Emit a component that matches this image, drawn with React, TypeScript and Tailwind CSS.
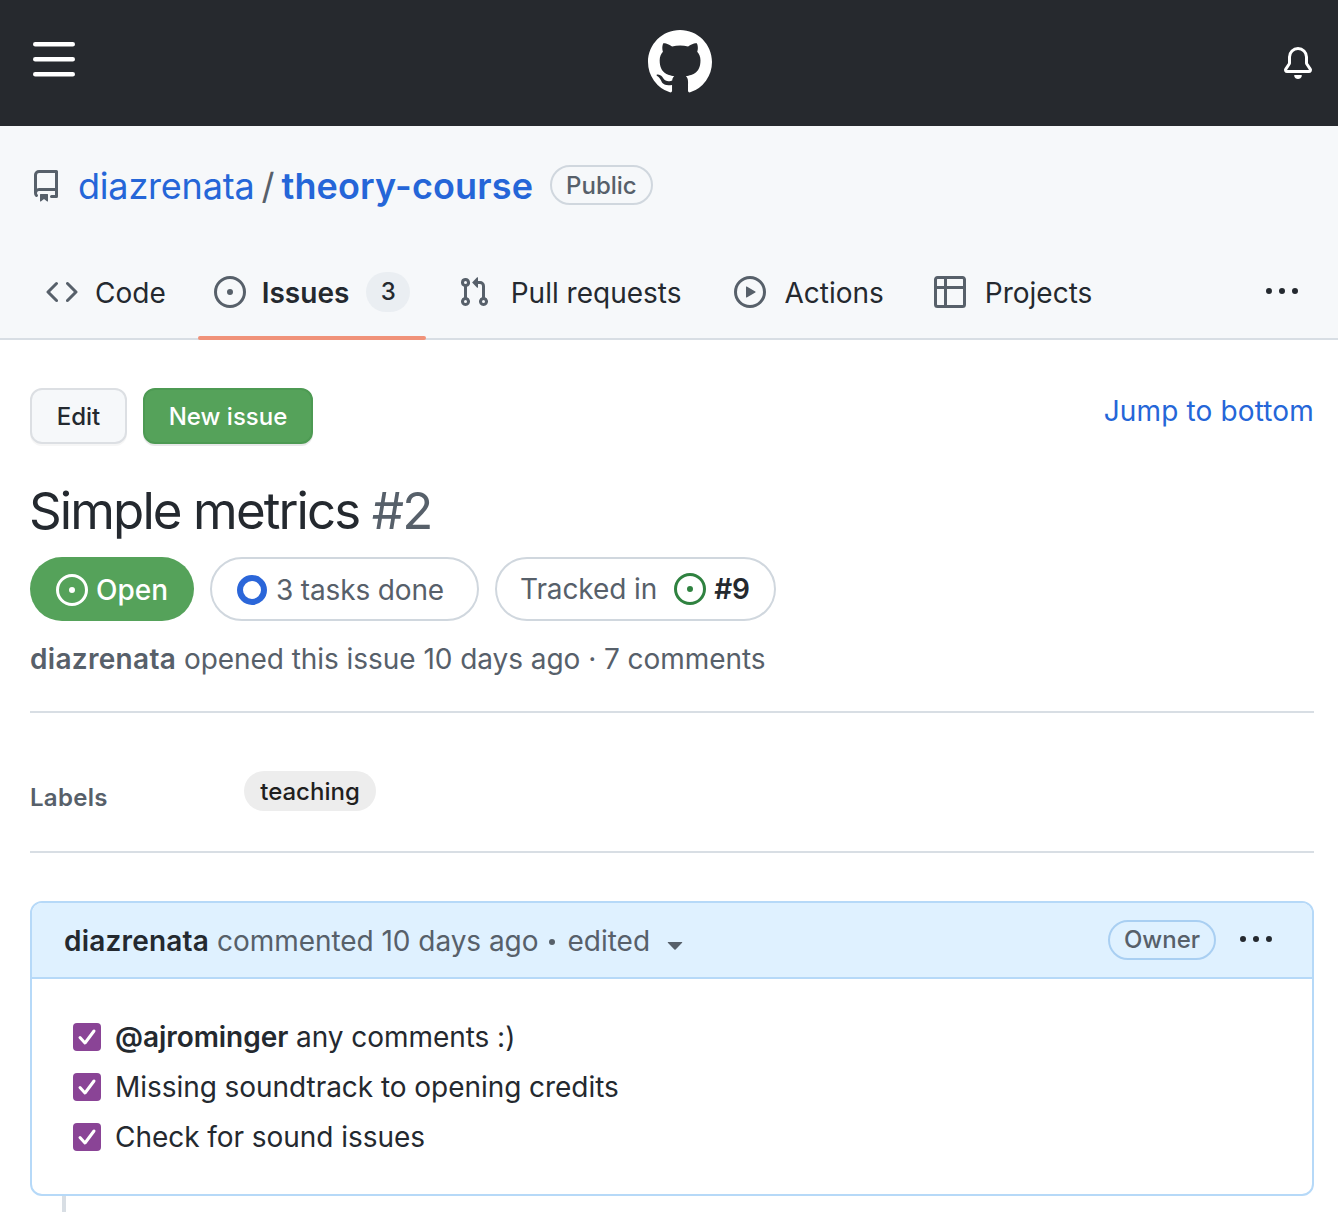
import React from 'react';

// Octicons at their 16px grid, the 24px versions are too thin for this page
const icons = {
  menu: 'M1 2.75A.75.75 0 0 1 1.75 2h12.5a.75.75 0 0 1 0 1.5H1.75A.75.75 0 0 1 1 2.75Zm0 5A.75.75 0 0 1 1.75 7h12.5a.75.75 0 0 1 0 1.5H1.75A.75.75 0 0 1 1 7.75ZM1.75 12h12.5a.75.75 0 0 1 0 1.5H1.75a.75.75 0 0 1 0-1.5Z',
  github:
    'M8 0c4.42 0 8 3.58 8 8a8.013 8.013 0 0 1-5.45 7.59c-.4.08-.55-.17-.55-.38 0-.27.01-1.13.01-2.2 0-.75-.25-1.23-.54-1.48 1.78-.2 3.65-.88 3.65-3.95 0-.88-.31-1.59-.82-2.15.08-.2.36-1.02-.08-2.12 0 0-.67-.22-2.2.82-.64-.18-1.32-.27-2-.27-.68 0-1.36.09-2 .27-1.53-1.03-2.2-.82-2.2-.82-.44 1.1-.16 1.92-.08 2.12-.51.56-.82 1.28-.82 2.15 0 3.06 1.86 3.75 3.64 3.95-.23.2-.44.55-.51 1.07-.46.21-1.61.55-2.33-.66-.15-.24-.6-.83-1.23-.82-.67.01-.27.38.01.53.34.19.73.9.82 1.13.16.45.68 1.31 2.69.94 0 .67.01 1.3.01 1.49 0 .21-.15.45-.55.38A7.995 7.995 0 0 1 0 8c0-4.42 3.58-8 8-8Z',
  bell: 'M8 16c.9 0 1.7-.6 1.9-1.5.1-.3-.1-.5-.4-.5h-3c-.3 0-.5.2-.4.5.2.9 1 1.5 1.9 1.5ZM3 5a5 5 0 0 1 10 0v2.947c0 .05.015.098.042.139l1.703 2.555A1.519 1.519 0 0 1 13.482 13H2.518a1.516 1.516 0 0 1-1.263-2.36l1.703-2.554A.255.255 0 0 0 3 7.947Zm5-3.5A3.5 3.5 0 0 0 4.5 5v2.947c0 .346-.102.683-.294.97l-1.703 2.556a.017.017 0 0 0-.003.01l.001.006c0 .002.002.004.004.006l.006.004.007.001h10.964l.007-.001.006-.004.004-.006.001-.007a.017.017 0 0 0-.003-.01l-1.703-2.554a1.745 1.745 0 0 1-.294-.97V5A3.5 3.5 0 0 0 8 1.5Z',
  repo: 'M2 2.5A2.5 2.5 0 0 1 4.5 0h8.75a.75.75 0 0 1 .75.75v12.5a.75.75 0 0 1-.75.75h-2.5a.75.75 0 0 1 0-1.5h1.75v-2h-8a1 1 0 0 0-.714 1.7.75.75 0 1 1-1.072 1.05A2.495 2.495 0 0 1 2 11.5Zm10.5-1h-8a1 1 0 0 0-1 1v6.708A2.486 2.486 0 0 1 4.5 9h8ZM5 12.25a.25.25 0 0 1 .25-.25h3.5a.25.25 0 0 1 .25.25v3.25a.25.25 0 0 1-.4.2l-1.45-1.087a.249.249 0 0 0-.3 0L5.4 15.7a.25.25 0 0 1-.4-.2Z',
  code: 'm11.28 3.22 4.25 4.25a.75.75 0 0 1 0 1.06l-4.25 4.25a.749.749 0 0 1-1.275-.326.749.749 0 0 1 .215-.734L13.94 8l-3.72-3.72a.749.749 0 0 1 .326-1.275.749.749 0 0 1 .734.215Zm-6.56 0a.751.751 0 0 1 1.042.018.751.751 0 0 1 .018 1.042L2.06 8l3.72 3.72a.749.749 0 0 1-.326 1.275.749.749 0 0 1-.734-.215L.47 8.53a.75.75 0 0 1 0-1.06Z',
  issue:
    'M8 9.5a1.5 1.5 0 1 0 0-3 1.5 1.5 0 0 0 0 3ZM8 0a8 8 0 1 1 0 16A8 8 0 0 1 8 0ZM1.5 8a6.5 6.5 0 1 0 13 0 6.5 6.5 0 0 0-13 0Z',
  pull: 'M1.5 3.25a2.25 2.25 0 1 1 3 2.122v5.256a2.251 2.251 0 1 1-1.5 0V5.372A2.25 2.25 0 0 1 1.5 3.25Zm5.677-.177L9.573.677A.25.25 0 0 1 10 .854V2.5h1A2.5 2.5 0 0 1 13.5 5v5.628a2.251 2.251 0 1 1-1.5 0V5a1 1 0 0 0-1-1h-1v1.646a.25.25 0 0 1-.427.177L7.177 3.427a.25.25 0 0 1 0-.354ZM3.75 2.5a.75.75 0 1 0 0 1.5.75.75 0 0 0 0-1.5Zm0 9.5a.75.75 0 1 0 0 1.5.75.75 0 0 0 0-1.5Zm8.25.75a.75.75 0 1 0 1.5 0 .75.75 0 0 0-1.5 0Z',
  play: 'M8 0a8 8 0 1 1 0 16A8 8 0 0 1 8 0ZM1.5 8a6.5 6.5 0 1 0 13 0 6.5 6.5 0 0 0-13 0Zm4.879-2.773 4.264 2.559a.25.25 0 0 1 0 .428l-4.264 2.559A.25.25 0 0 1 6 10.559V5.442a.25.25 0 0 1 .379-.215Z',
  table:
    'M0 1.75C0 .784.784 0 1.75 0h12.5C15.216 0 16 .784 16 1.75v12.5A1.75 1.75 0 0 1 14.25 16H1.75A1.75 1.75 0 0 1 0 14.25ZM6.5 6.5v8h7.75a.25.25 0 0 0 .25-.25V6.5Zm8-1.5V1.75a.25.25 0 0 0-.25-.25H6.5V5Zm-13 1.5v7.75c0 .138.112.25.25.25H5v-8ZM5 5V1.5H1.75a.25.25 0 0 0-.25.25V5Z',
  kebab:
    'M8 9a1.5 1.5 0 1 0 0-3 1.5 1.5 0 0 0 0 3ZM1.5 9a1.5 1.5 0 1 0 0-3 1.5 1.5 0 0 0 0 3Zm13 0a1.5 1.5 0 1 0 0-3 1.5 1.5 0 0 0 0 3Z',
  caret:
    'm4.427 7.427 3.396 3.396a.25.25 0 0 0 .354 0l3.396-3.396A.25.25 0 0 0 11.396 7H4.604a.25.25 0 0 0-.177.427Z',
};

function Icon({ name, size = 32, className }: { name: keyof typeof icons; size?: number; className?: string }) {
  return (
    <svg viewBox="0 0 16 16" width={size} height={size} fill="currentColor" className={`shrink-0 ${className ?? ''}`}>
      <path fillRule="evenodd" d={icons[name]} />
    </svg>
  );
}

const tasks = [
  { id: 1, mention: '@ajrominger', text: ' any comments :)' },
  { id: 2, mention: '', text: 'Missing soundtrack to opening credits' },
  { id: 3, mention: '', text: 'Check for sound issues' },
];

function TaskRow({ mention, text }: { mention: string; text: string }) {
  return (
    <li className="flex h-[50px] items-center gap-[14px]">
      <span className="flex h-[28px] w-[28px] items-center justify-center rounded-[4px] bg-[#8a4496] text-white">
        <svg viewBox="0 0 28 28" width={28} height={28} fill="none" stroke="currentColor" strokeWidth={3} strokeLinecap="round" strokeLinejoin="round">
          <path d="M7 14.5l5 5.5 9-12" />
        </svg>
      </span>
      <span className="text-[28px] tracking-[-0.05px] text-[#24292f]">
        {mention && <strong className="font-semibold">{mention}</strong>}
        {text}
      </span>
    </li>
  );
}

export default function App() {
  return (
    <div className="h-[1212px] overflow-hidden bg-white font-['Inter',sans-serif] text-[#24292f]">
      {/* Top bar */}
      <header className="flex h-[126px] items-center justify-between bg-[#26292e] pl-[30px] pr-[24px] text-white">
        <Icon name="menu" size={48} className="-mt-[6px]" />
        <Icon name="github" size={64} className="-mt-[2px]" />
        <Icon name="bell" />
      </header>

      {/* Repo header */}
      <div className="h-[214px] border-b-2 border-[#d8dee4] bg-[#f6f8fa]">
        <div className="flex items-center pl-[30px] pt-[38px]">
          <Icon name="repo" className="text-[#57606a]" />
          <a className="ml-[16px] text-[36px] leading-[44px] tracking-[-0.2px] text-[#2566d8]">diazrenata</a>
          <span className="ml-[7px] mr-[7px] text-[36px] leading-[44px] text-[#57606a]">/</span>
          <a className="text-[36px] font-semibold leading-[44px] tracking-[0.15px] text-[#2566d8]">theory-course</a>
          <span className="-mt-[2px] ml-[17px] flex h-[40px] items-center rounded-full border-2 border-[#d0d7de] px-[14px] pt-[2px] text-[24px] font-medium text-[#57606a]">
            Public
          </span>
        </div>

        <nav className="mt-[53px] flex h-[74px] items-start pl-[30px] pr-[24px] text-[28px]">
          <div className="flex h-[64px] items-center gap-[17px] pl-[16px] pr-[33px]">
            <Icon name="code" className="-mt-[2px] text-[#57606a]" />
            Code
          </div>
          <div className="relative -ml-[1px] flex h-[64px] w-[228px] items-center pl-[16px]">
            <Icon name="issue" className="-mt-[2px] text-[#57606a]" />
            <span className="ml-[16px] font-semibold">Issues</span>
            <span className="mb-[2px] ml-[17px] flex h-[40px] w-[44px] items-center justify-center rounded-full bg-[#eaeef2] text-[24px] font-medium">
              3
            </span>
            <span className="absolute -bottom-[15px] left-0 h-[4px] w-full rounded-[2px] bg-[#f09279]" />
          </div>
          <div className="ml-[32px] flex h-[64px] items-center gap-[21px]">
            <Icon name="pull" className="-mt-[2px] text-[#57606a]" />
            Pull requests
          </div>
          <div className="ml-[53px] flex h-[64px] items-center gap-[18px]">
            <Icon name="play" className="-mt-[2px] text-[#57606a]" />
            Actions
          </div>
          <div className="ml-[50px] flex h-[64px] items-center gap-[19px]">
            <Icon name="table" className="-mt-[2px] text-[#57606a]" />
            Projects
          </div>
          <Icon name="kebab" className="ml-auto mr-[16px] mt-[15px]" />
        </nav>
      </div>

      <main className="pl-[30px] pr-[24px]">
        {/* Actions */}
        <div className="flex items-start justify-between pt-[48px]">
          <div className="flex gap-[16px]">
            <button className="h-[56px] w-[97px] rounded-[12px] border-2 border-[#dcdfe3] bg-[#f6f8fa] pt-[2px] text-[24px] font-medium shadow-[0_2px_0_rgba(27,31,36,0.04)]">
              Edit
            </button>
            <button className="h-[56px] w-[170px] rounded-[12px] border-2 border-[#4d9a53] bg-[#55a25a] pt-[2px] text-[24px] font-medium text-white shadow-[0_2px_0_rgba(27,31,36,0.1)]">
              New issue
            </button>
          </div>
          <a className="text-[28px] leading-[46px] tracking-[0.15px] text-[#2566d8]">Jump to bottom</a>
        </div>

        <h1 className="-ml-[1px] mt-[36px] text-[51px] leading-[62px] tracking-[-1.9px]">
          Simple metrics <span className="text-[#57606a]">#2</span>
        </h1>

        {/* Badges */}
        <div className="mt-[15px] flex gap-[16px] text-[28px]">
          <span className="flex h-[64px] w-[164px] items-center gap-[8px] rounded-full bg-[#55a25a] pl-[26px] pt-[2px] font-medium text-white">
            <Icon name="issue" />
            Open
          </span>
          <span className="flex h-[64px] w-[269px] items-center gap-[9px] rounded-full border-2 border-[#d0d7de] pl-[25px] pt-[2px] tracking-[-0.15px] text-[#57606a]">
            <span className="h-[30px] w-[30px] rounded-full border-[6px] border-[#2b66d9]" />
            3 tasks done
          </span>
          <span className="flex h-[64px] w-[281px] items-center rounded-full border-2 border-[#d0d7de] pl-[23px] tracking-[-0.1px] text-[#57606a]">
            Tracked in
            <Icon name="issue" className="ml-[17px] text-[#2f8240]" />
            <span className="ml-[8px] font-semibold text-[#24292f]">#9</span>
          </span>
        </div>

        <p className="mt-[17px] border-b-2 border-[#d8dee4] pb-[31px] text-[28px] leading-[42px] tracking-[-0.05px] text-[#57606a]">
          <strong className="font-semibold tracking-[0.3px]">diazrenata</strong> opened this issue 10 days ago · 7 comments
        </p>

        {/* Labels */}
        <div className="flex h-[140px] items-start border-b-2 border-[#d8dee4] pt-[58px]">
          <span className="w-[214px] pt-[12px] text-[24px] font-semibold leading-[30px] tracking-[0.3px] text-[#57606a]">Labels</span>
          <span className="flex h-[40px] w-[132px] items-center justify-center rounded-full bg-[#ededed] pt-[2px] text-[24px] font-medium text-[#1f1f1f]">
            teaching
          </span>
        </div>

        {/* First comment */}
        <section className="mt-[48px] overflow-hidden rounded-[12px] border-2 border-[#b6d9f8]">
          <div className="flex h-[76px] items-center justify-between border-b-2 border-[#b6d9f8] bg-[#dff1ff] pl-[32px] pr-[40px]">
            <div className="flex items-center pt-[2px] text-[28px] text-[#57606a]">
              <strong className="font-semibold tracking-[0.2px] text-[#24292f]">diazrenata</strong>
              <span className="ml-[8px] tracking-[-0.05px]">commented 10 days ago</span>
              <span className="ml-[11px] mr-[12px] mt-[2px] h-[6px] w-[6px] rounded-full bg-[#57606a]" />
              <span>edited</span>
              <Icon name="caret" className="ml-[9px] mt-[6px]" />
            </div>
            <div className="flex items-center gap-[24px]">
              <span className="flex h-[40px] w-[108px] items-center justify-center rounded-full border-2 border-[#a9cff2] text-[24px] font-medium text-[#57606a]">
                Owner
              </span>
              <Icon name="kebab" className="text-[#24292f]" />
            </div>
          </div>
          <ul className="px-[41px] pb-[32px] pt-[33px]">
            {tasks.map((task) => (
              <TaskRow key={task.id} mention={task.mention} text={task.text} />
            ))}
          </ul>
        </section>
        <div className="ml-[32px] h-[20px] w-[4px] bg-[#d8dee4]" />
      </main>
    </div>
  );
}
